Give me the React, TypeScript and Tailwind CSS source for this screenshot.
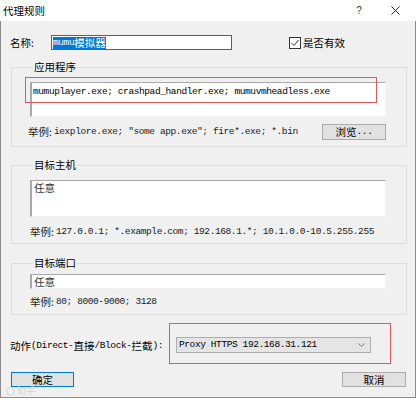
import React from "react";

const cjk = "font-['Noto_Sans_CJK_SC',sans-serif] text-[10.5px] leading-[12px]";
const mono = "font-['Liberation_Mono','Noto_Sans_CJK_SC',monospace] text-[9.5px] tracking-[-0.4px] leading-[12px]";

function Mono({ children }: { children: React.ReactNode }) {
  return <span className={mono}>{children}</span>;
}

function Example({ children, className = "" }: { children: React.ReactNode; className?: string }) {
  return (
    <div className={`flex items-center h-[12px] text-[#1a1a1a] whitespace-nowrap ${className}`}>
      <span className={cjk}>举例:</span>
      <span className="w-[2px]" />
      <Mono>{children}</Mono>
    </div>
  );
}

function Group({ title, children, className = "" }: { title: string; children: React.ReactNode; className?: string }) {
  return (
    <fieldset className={`border border-[#dcdcdc] pl-[18px] pr-[20px] ${className}`}>
      <legend className={`${cjk} ml-[3px] px-[1px] text-black`}>{title}</legend>
      {children}
    </fieldset>
  );
}

function Box({ className = "", children }: { className?: string; children?: React.ReactNode }) {
  return (
    <div
      className={`bg-white border-t border-l-2 border-t-[#a9a9a9] border-l-[#a9a9a9] border-r border-b border-r-[#f4f4f4] border-b-[#f4f4f4] ${className}`}
    >
      {children}
    </div>
  );
}

export default function App() {
  return (
    <div className={`relative w-[416px] h-[399px] bg-white overflow-hidden text-black ${cjk}`}>
      {/* Title bar */}
      <div className="h-[21px] flex items-center pl-[3px] pr-[16px]">
        <span className="flex-1">代理规则</span>
        <span className="w-[10px] text-center font-['Liberation_Sans',sans-serif] text-[10px] text-[#333]">?</span>
        <span className="w-[27px]" />
        <svg width="9" height="9" viewBox="0 0 9 9" className="text-[#222]">
          <path d="M0.5 0.5 L8.5 8.5 M8.5 0.5 L0.5 8.5" stroke="currentColor" strokeWidth="1" />
        </svg>
      </div>

      {/* Dialog body */}
      <div className="relative h-[377px] bg-[#f0f0f0] border-x border-b border-[#8c8c8c] pt-[14px] pl-[10px] pr-[8px] flex flex-col">
        {/* Name row */}
        <div className="flex items-center h-[15px]">
          <span className="w-[41px] -ml-[1px] pl-0">名称:</span>
          <div className="w-[181px] h-[15px] border border-[#0078d7] bg-white flex items-center pl-[1px]">
            <span className="bg-[#0078d7] text-white flex items-center h-[12px]">
              <Mono>mumu</Mono>
              <span>模拟器</span>
            </span>
          </div>
          <div className="ml-[57px] flex items-center">
            <svg width="12" height="12" viewBox="0 0 12 12">
              <rect x="0.5" y="0.5" width="11" height="11" fill="#fff" stroke="#333" />
              <path d="M2.5 6 L5 8.5 L9.5 3" fill="none" stroke="#333" strokeWidth="1" />
            </svg>
            <span className="ml-[2px]">是否有效</span>
          </div>
        </div>

        {/* 应用程序 */}
        <Group title="应用程序" className="mt-[11px] pb-[6px]">
          <div className="relative mt-[9px]">
            <Box className="h-[35px] pl-[1px] pt-[1px]">
              <div className="text-black whitespace-nowrap">
                <Mono>mumuplayer.exe; crashpad_handler.exe; mumuvmheadless.exe</Mono>
              </div>
            </Box>
            <div className="absolute left-[-5px] top-[-5px] w-[352px] h-[26px] border border-[#e0575c]" />
          </div>
          <div className="mt-[7px] flex items-center h-[16px]">
            <Example className="-ml-[2px]">iexplore.exe; "some app.exe"; fire*.exe; *.bin</Example>
            <button className="ml-auto w-[64px] h-[16px] bg-[#e1e1e1] border border-[#adadad] flex items-center justify-center">
              <span>浏览</span>
              <Mono>...</Mono>
            </button>
          </div>
        </Group>

        {/* 目标主机 */}
        <Group title="目标主机" className="mt-[12px] pb-[5px]">
          <Box className="mt-[9px] h-[37px] pl-[2px] pt-[1px] text-[#333]">任意</Box>
          <Example className="mt-[9px]">127.0.0.1; *.example.com; 192.168.1.*; 10.1.0.0-10.5.255.255</Example>
        </Group>

        {/* 目标端口 */}
        <Group title="目标端口" className="mt-[13px] pb-[6px]">
          <Box className="mt-[5px] h-[15px] pl-[2px] flex items-center text-[#333]">任意</Box>
          <Example className="mt-[7px]">80; 8000-9000; 3128</Example>
        </Group>

        {/* Action row */}
        <div className="mt-[8px] flex items-start">
          <div className="w-[159px] mt-[17px] -ml-[1px] flex items-center whitespace-nowrap">
            <span>动作</span>
            <Mono>(Direct-</Mono>
            <span>直接</span>
            <Mono>/Block-</Mono>
            <span>拦截</span>
            <Mono>):</Mono>
          </div>
          <div className="w-[222px] h-[41px] border border-[#e0575c] pt-[13px] pl-[6px]">
            <div className="w-[195px] h-[16px] bg-[#e5e5e5] border border-[#adadad] flex items-center pl-[2px] pr-[5px]">
              <Mono>Proxy HTTPS 192.168.31.121</Mono>
              <svg width="7" height="4" viewBox="0 0 7 4" className="ml-auto">
                <path d="M0.5 0.5 L3.5 3.5 L6.5 0.5" fill="none" stroke="#777" strokeWidth="1" />
              </svg>
            </div>
          </div>
        </div>

        {/* Buttons */}
        <div className="mt-[8px] flex justify-between pr-[1px]">
          <button className="w-[63px] h-[15px] bg-[#e1e1e1] border border-[#0078d7] flex items-center justify-center">
            确定
          </button>
          <button className="w-[64px] h-[15px] bg-[#e1e1e1] border border-[#adadad] flex items-center justify-center">
            取消
          </button>
        </div>

        {/* watermark */}
        <div className="absolute left-[5px] bottom-[1px] flex items-center gap-[2px] text-[#d6d6d6] text-[9px] leading-[10px]">
          <span className="w-[9px] h-[9px] rounded-full border border-[#d6d6d6]" />
          <span>知乎</span>
        </div>
      </div>
    </div>
  );
}
